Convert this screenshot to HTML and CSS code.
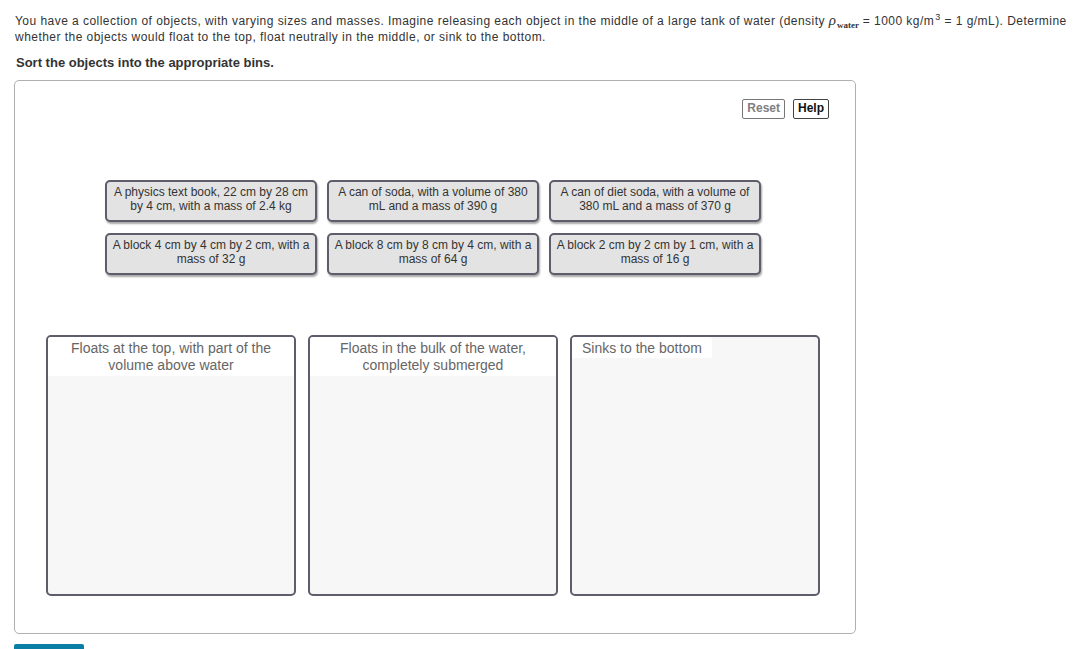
FILE: index.html
```html
<!DOCTYPE html>
<html>
<head>
<meta charset="utf-8">
<link rel="stylesheet" href="styles.css">
</head>
<body>
<div class="page">
  <p class="intro">You have a collection of objects, with varying sizes and masses. Imagine releasing each object in the middle of a large tank of water (density <span class="rho">ρ</span><span class="sub">water</span> = 1000 kg/m<span class="sup">3</span> = 1 g/mL). Determine whether the objects would float to the top, float neutrally in the middle, or sink to the bottom.</p>
  <p class="task">Sort the objects into the appropriate bins.</p>
  <div class="panel">
    <div class="toolbar">
      <button class="btn reset">Reset</button>
      <button class="btn help">Help</button>
    </div>
    <div class="items">
      <div class="item">A physics text book, 22 cm by 28 cm by 4 cm, with a mass of 2.4 kg</div>
      <div class="item">A can of soda, with a volume of 380 mL and a mass of 390 g</div>
      <div class="item">A can of diet soda, with a volume of 380 mL and a mass of 370 g</div>
      <div class="item">A block 4 cm by 4 cm by 2 cm, with a mass of 32 g</div>
      <div class="item">A block 8 cm by 8 cm by 4 cm, with a mass of 64 g</div>
      <div class="item">A block 2 cm by 2 cm by 1 cm, with a mass of 16 g</div>
    </div>
    <div class="bins">
      <div class="bin"><div class="bin-head">Floats at the top, with part of the volume above water</div></div>
      <div class="bin"><div class="bin-head">Floats in the bulk of the water, completely submerged</div></div>
      <div class="bin"><div class="bin-head short">Sinks to the bottom</div></div>
    </div>
  </div>
  <div class="submit"></div>
</div>
</body>
</html>
```
FILE: styles.css
```css
html, body { margin: 0; padding: 0; background: #fff; }
body { font-family: "Liberation Sans", Arial, sans-serif; color: #333; }
.page { padding: 13px 0 0 14px; width: 1058px; }
.intro { margin: 0 0 0 1px; font-size: 12px; line-height: 16px; color: #333; letter-spacing: 0.46px; }
.rho { font-family: "Liberation Serif", serif; font-style: italic; font-size: 15px; letter-spacing: 0; line-height: 0; margin-right: 1px; }
.sub { font-family: "Liberation Serif", serif; font-weight: bold; font-size: 9px; position: relative; top: 3px; letter-spacing: 0; line-height: 0; }
.sup { font-size: 9px; position: relative; top: -5px; line-height: 0; margin-left: 1px; }
.task { margin: 10px 0 0 2px; font-size: 13px; font-weight: bold; line-height: 16px; color: #333; }
.panel {
  margin-top: 9px; width: 840px; height: 552px;
  border: 1px solid #b0b0b0; border-radius: 5px;
}
.toolbar { display: flex; justify-content: flex-end; gap: 8px; padding: 18px 26px 0 0; }
.btn {
  font-family: "Liberation Sans", Arial, sans-serif; font-size: 12px; line-height: 15px; font-weight: bold;
  background: #fff; border: 1px solid #777; border-radius: 2px; padding: 1px 4px 2px; margin: 0;
}
.reset { color: #808080; }
.help { color: #111; border-color: #444; }
.items {
  display: grid; grid-template-columns: repeat(3, 212px); column-gap: 10px; row-gap: 11px;
  margin: 61px 0 0 90px;
}
.item {
  box-sizing: border-box; height: 42px;
  background: #e3e3e3; border: 2px solid #5d5d6b; border-radius: 5px;
  box-shadow: 1px 2px 2px rgba(0,0,0,0.35);
  font-size: 12px; line-height: 14px; color: #333; text-align: center;
  padding: 3px 2px 0;
}
.bins { display: grid; grid-template-columns: repeat(3, 250px); column-gap: 12px; margin: 60px 0 0 31px; }
.bin {
  height: 261px; box-sizing: border-box;
  background: #f7f7f7; border: 2px solid #5d5d6b; border-radius: 5px;
}
.bin-head {
  background: #fff; color: #666; font-size: 14px; line-height: 17px; text-align: center;
  padding: 3px 6px 2px;
  border-radius: 3px 3px 0 0;
}
.bin-head.short { display: inline-block; text-align: left; padding: 3px 10px 1px 10px; }
.submit { margin-top: 10px; width: 70px; height: 6px; background: #0a7ea4; border-radius: 2px 2px 0 0; }
```
